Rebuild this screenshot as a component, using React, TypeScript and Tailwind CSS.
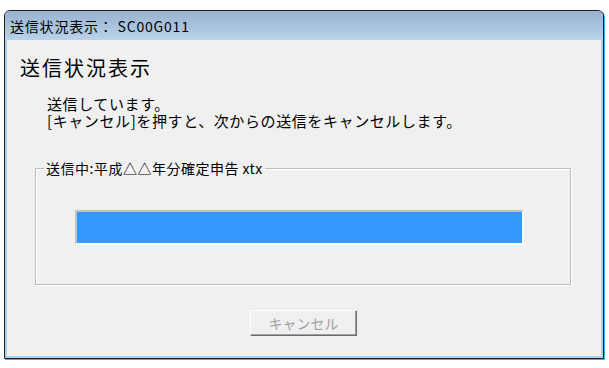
export default function App() {
  const font = { fontFamily: '"Noto Sans CJK JP", "Liberation Sans", sans-serif' };

  return (
    <div className="w-[609px] h-[368px] bg-white pt-[10px] pl-[4px]" style={font}>
      <div className="w-[600px] h-[349px] border border-[#1e1e1e] rounded-t-[6px] overflow-hidden bg-[#b4cfe9] flex flex-col shadow-[1px_1px_0_#3fb6d8]">
        {/* title bar */}
        <div className="h-[29px] shrink-0 bg-gradient-to-b from-[#98b2cf] to-[#bad3eb] flex items-center pl-[5px] text-[14px] tracking-[0.8px] text-black leading-none">
          送信状況表示： SC00G011
        </div>

        <div className="flex-1 mx-[2px] mb-[2px] bg-[#f0f0f0] flex flex-col">
          <h1 className="mt-[16px] ml-[13px] text-[20px] leading-[24px] tracking-[2px] text-black font-normal">
            送信状況表示
          </h1>

          <div className="mt-[15px] ml-[40px] flex flex-col text-[15px] tracking-[0.6px] text-black">
            <div className="h-[17px] leading-[17px]">送信しています。</div>
            <div className="h-[17px] leading-[17px]">[キャンセル]を押すと、次からの送信をキャンセルします。</div>
          </div>

          <fieldset className="mt-[31px] ml-[28px] w-[536px] h-[125px] border border-[#bcbcbc] shadow-[inset_1px_1px_0_#fff,1px_1px_0_#fff]">
            <legend className="ml-[8px] px-[2px] text-[14px] leading-[16px] tracking-[0.5px] text-black">
              送信中:平成△△年分確定申告 xtx
            </legend>
            <div className="mt-[34px] ml-[39px] w-[449px] h-[35px] border-2 border-t-[#c3c3c3] border-l-[#c3c3c3] border-b-[#ffffff] border-r-[#ffffff] bg-[#3399ff]" />
          </fieldset>

          <div className="mt-[25px] ml-[243px]">
            <button
              disabled
              className="w-[107px] h-[26px] bg-[#f0f0f0] border border-t-[#ffffff] border-l-[#ffffff] border-b-[#6b6b6b] border-r-[#6b6b6b] shadow-[inset_-1px_-1px_0_#a0a0a0] text-[14px] text-[#a0a0a0] flex items-center justify-center"
              style={font}
            >
              キャンセル
            </button>
          </div>
        </div>
      </div>
    </div>
  );
}
